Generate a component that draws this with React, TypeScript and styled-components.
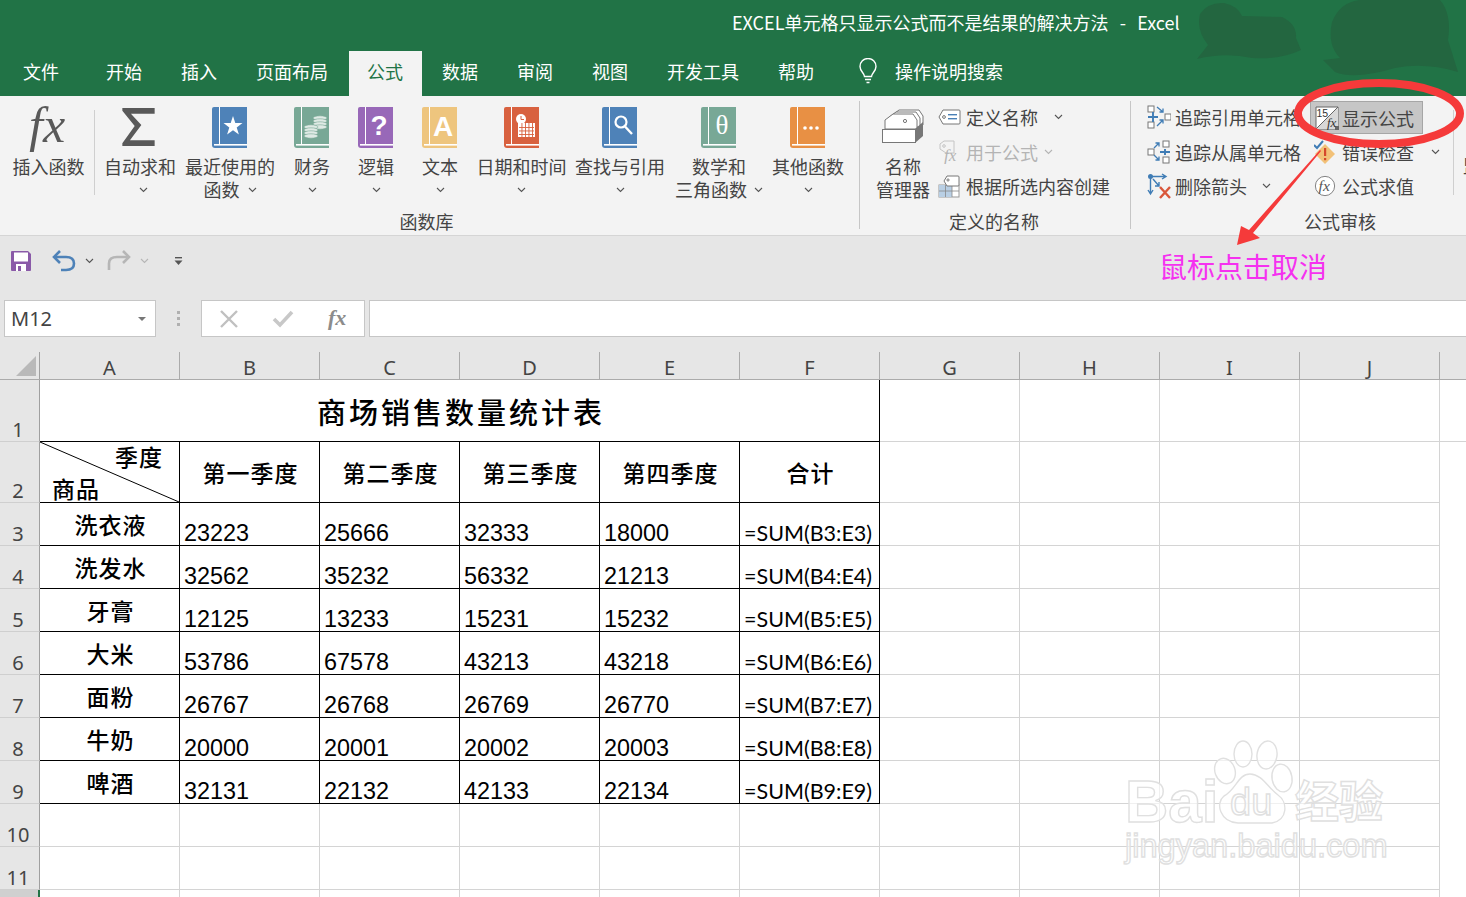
import React from "react";
import styled, { createGlobalStyle } from "styled-components";

const Global = createGlobalStyle`
  html, body { margin: 0; padding: 0; background: #fff; overflow: hidden; }
  * { box-sizing: border-box; }
`;

const CJK = `"Noto Sans CJK SC", "Noto Sans", sans-serif`;

const Page = styled.div`
  position: relative;
  width: 1466px;
  height: 897px;
  overflow: hidden;
  font-family: ${CJK};
  background: #fff;
`;

/* ---------- title + tabs ---------- */
const Head = styled.header`
  position: relative;
  height: 96px;
  background: #217346;
  color: #fff;
  overflow: hidden;
`;
const TitleRow = styled.div`
  position: relative;
  height: 51px;
  padding: 9px 0 0 732px;
  font-size: 18px;
  line-height: 26px;
  white-space: pre;
  word-spacing: 1.6px;
`;
const TabRow = styled.nav`
  display: flex;
  gap: 2px;
  height: 45px;
  padding-left: 4.5px;
`;
const Tab = styled.div<{ $active?: boolean; $after?: number }>`
  height: 45px;
  padding: 0 18.5px 5px;
  margin-right: ${(p) => p.$after ?? 0}px;
  display: flex;
  align-items: center;
  font-size: 18px;
  background: ${(p) => (p.$active ? "#f3f3f3" : "transparent")};
  color: ${(p) => (p.$active ? "#217346" : "#fff")};
`;
const Search = styled.div`
  display: flex;
  align-items: center;
  gap: 17px;
  margin-left: 23.5px;
  font-size: 18px;
  padding-bottom: 5px;
`;
const HeadBlobs = styled.svg`
  position: absolute;
  top: 0;
  left: 1190px;
`;

/* ---------- ribbon ---------- */
const Ribbon = styled.section`
  display: flex;
  height: 140px;
  background: #f3f3f3;
  border-bottom: 1px solid #d5d5d5;
  color: #444;
  font-size: 18px;
  overflow: hidden;
`;
const Group = styled.div<{ $w: number }>`
  width: ${(p) => p.$w}px;
  flex: none;
  display: flex;
  flex-direction: column;
  height: 139px;
`;
const GroupBody = styled.div<{ $left?: number }>`
  flex: 1;
  display: flex;
  padding-left: ${(p) => p.$left ?? 0}px;
`;
const GroupLabel = styled.div<{ $pl?: number; $pr?: number }>`
  height: 26px;
  line-height: 26px;
  margin-bottom: 1px;
  padding-left: ${(p) => p.$pl ?? 0}px;
  padding-right: ${(p) => p.$pr ?? 0}px;
  text-align: center;
  white-space: nowrap;
`;
const GroupSep = styled.div`
  width: 1px;
  height: 128px;
  margin-top: 5px;
  background: #c6c6c6;
  flex: none;
`;
const InnerSep = styled.div`
  width: 1px;
  height: 85px;
  margin-top: 14px;
  background: #cfcfcf;
  flex: none;
`;
const BigBtn = styled.div<{ $w: number; $ml?: number }>`
  width: ${(p) => p.$w}px;
  margin-left: ${(p) => p.$ml ?? 0}px;
  flex: none;
  display: flex;
  flex-direction: column;
  align-items: center;
  padding-top: 11px;
  white-space: nowrap;
`;
const BigIcon = styled.div<{ $gap?: number }>`
  height: 40px;
  margin-bottom: ${(p) => p.$gap ?? 8}px;
  padding-right: 1px;
  display: flex;
  align-items: center;
  justify-content: center;
`;
const BtnLine = styled.div`
  height: 23px;
  line-height: 23px;
  display: flex;
  align-items: center;
  gap: 5px;
`;
const Col = styled.div<{ $w?: number }>`
  width: ${(p) => (p.$w ? `${p.$w}px` : "auto")};
  flex: none;
  padding-top: 4px;
`;
const SmallRow = styled.div<{ $icon: number; $gap: number; $dim?: boolean; $pad?: number }>`
  height: 34.5px;
  display: flex;
  align-items: center;
  gap: ${(p) => p.$gap}px;
  padding-left: ${(p) => p.$pad ?? 0}px;
  white-space: nowrap;
  color: ${(p) => (p.$dim ? "#b4b4b4" : "#444")};
  & > svg:first-child {
    width: ${(p) => p.$icon}px;
    flex: none;
  }
`;
const ActiveRow = styled(SmallRow)`
  height: 33px;
  margin: 1px 0 0.5px;
  width: 113px;
  background: #c6c6c6;
  border: 1px solid #a6a6a6;
  padding-left: 4px;
`;
const Clip = styled.div`
  position: relative;
  top: 0;
  padding: 56px 0 0 9px;
  white-space: nowrap;
`;
const Chev = styled.svg<{ $ml?: number }>`
  margin-left: ${(p) => p.$ml ?? 0}px;
  flex: none;
`;

const Chevron = ({ ml, color = "#555" }: { ml?: number; color?: string }) => (
  <Chev $ml={ml} width="9" height="6" viewBox="0 0 9 6">
    <polyline points="1,1 4.5,4.5 8,1" fill="none" stroke={color} strokeWidth="1.1" />
  </Chev>
);

const Book = ({ color, children }: { color: string; children?: React.ReactNode }) => (
  <svg width="35" height="41" viewBox="0 0 35 41">
    <path d="M2 0H35V41H3Q0 41 0 38V2Q0 0 2 0Z" fill={color} />
    <rect x="7" y="0" width="1" height="37" fill="#fff" />
    <rect x="2" y="37" width="33" height="1.6" fill="#fff" />
    {children}
  </svg>
);

const FxBig = () => (
  <svg width="44" height="50" viewBox="0 0 44 50">
    <text x="3" y="40" fontFamily="'Liberation Serif', serif" fontStyle="italic" fontSize="50" fill="#595959">
      fx
    </text>
  </svg>
);
const Sigma = () => (
  <svg width="33" height="38" viewBox="0 0 34 40" style={{ marginRight: 3 }}>
    <path d="M0 0H34V6H9L20 18L8 34H34V40H0V37L13 19L0 3Z" fill="#595959" />
  </svg>
);
const Coins = () => (
  <>
    {[11, 14, 17, 20].map((y) => (
      <ellipse key={y} cx="26" cy={y} rx="7" ry="2.2" fill="#dfeae5" stroke="#78a896" strokeWidth="0.6" />
    ))}
    {[20, 23, 26, 29].map((y) => (
      <ellipse key={y} cx="17" cy={y} rx="7" ry="2.2" fill="#dfeae5" stroke="#78a896" strokeWidth="0.6" />
    ))}
  </>
);
const BookGlyph = styled.text`
  fill: #fff;
  text-anchor: middle;
  font-family: "Liberation Sans", sans-serif;
  font-weight: 700;
`;
const DateGlyph = () => (
  <>
    <circle cx="17" cy="12" r="5" fill="#fff" />
    <path d="M17 9V12.5H20" stroke="#d8613f" strokeWidth="1" fill="none" />
    <rect x="14" y="16" width="17" height="14" fill="#fff" />
    {[17.5, 21, 24.5, 28].map((x) => (
      <rect key={x} x={x} y="16" width="0.9" height="14" fill="#d8613f" />
    ))}
    {[20, 23.5, 27].map((y) => (
      <rect key={y} x="15" y={y} width="15" height="0.9" fill="#d8613f" />
    ))}
  </>
);
const SearchGlyph = () => (
  <>
    <circle cx="19" cy="15" r="5.5" fill="none" stroke="#fff" strokeWidth="2.2" />
    <line x1="23" y1="19.5" x2="30" y2="27" stroke="#fff" strokeWidth="2.4" />
  </>
);

const NameMgr = () => (
  <svg width="44" height="36" viewBox="0 0 44 36">
    <path d="M4 20V11L12 5H32L36 11V20Z" fill="#fff" stroke="#777" strokeWidth="1" transform="translate(6 -4)" />
    <path d="M4 20V11L12 5H32L36 11V20Z" fill="#fff" stroke="#777" strokeWidth="1" transform="translate(3 -2)" />
    <path d="M4 20V11L12 5H32L36 11V20Z" fill="#fff" stroke="#777" strokeWidth="1" />
    <circle cx="24" cy="12" r="1.6" fill="none" stroke="#777" />
    <path d="M34 20L42 13V27L34 34Z" fill="#777" />
    <rect x="1.5" y="20.5" width="33" height="13" fill="#fff" stroke="#777" />
  </svg>
);
const TagIcon = () => (
  <svg height="18" viewBox="0 0 23 18">
    <path d="M1 9L5 2H21Q22 2 22 3V15Q22 16 21 16H5Z" fill="#fff" stroke="#777" />
    <circle cx="6" cy="9" r="1.4" fill="none" stroke="#777" />
    <rect x="10" y="6" width="9" height="1.4" fill="#4a7fb5" />
    <rect x="10" y="10" width="9" height="1.4" fill="#4a7fb5" />
  </svg>
);
const UseFormula = () => (
  <svg height="24" viewBox="0 0 22 24">
    <path d="M2 4L6 1H16V13L8 13L2 9Z" fill="none" stroke="#c4c4c4" />
    <circle cx="6" cy="6" r="1.3" fill="none" stroke="#c4c4c4" />
    <text x="6" y="21" fontFamily="'Liberation Serif', serif" fontStyle="italic" fontSize="17" fill="#b4b4b4">
      fx
    </text>
  </svg>
);
const CreateSel = () => (
  <svg height="24" viewBox="0 0 22 24">
    <rect x="1" y="11" width="20" height="12" fill="#fff" stroke="#999" />
    <rect x="1" y="11" width="13" height="12" fill="#b9cfe4" />
    <path d="M1 17H21M7.5 11V23M14 11V23" stroke="#888" strokeWidth="0.8" />
    <path d="M6 7L9 2H20Q21 2 21 3V11Q21 12 20 12H9Z" fill="#fff" stroke="#777" />
    <circle cx="10" cy="6" r="1.1" fill="none" stroke="#777" />
  </svg>
);
const TraceCell = ({ x, y }: { x: number; y: number }) => (
  <rect x={x} y={y} width="6" height="6" fill="#fff" stroke="#777" />
);
const TracePrec = () => (
  <svg height="24" viewBox="0 0 24 24">
    <TraceCell x={1} y={1} />
    <TraceCell x={1} y={17} />
    <TraceCell x={18} y={9} />
    <path d="M1 12H11M6 7V17" stroke="#3f7cb5" strokeWidth="1.9" />
    <path d="M10 2L16 7M16 3.5V7H12.5M10 21L16 15M16 18.5V15H12.5" stroke="#3f7cb5" strokeWidth="1.3" fill="none" />
  </svg>
);
const TraceDep = () => (
  <svg height="24" viewBox="0 0 24 24">
    <TraceCell x={1} y={9} />
    <TraceCell x={16} y={1} />
    <TraceCell x={16} y={17} />
    <path d="M13 12H23M18 9V15" stroke="#3f7cb5" strokeWidth="1.9" />
    <path d="M7 8L12 3M8.5 3H12V6.5M7 15L12 20M12 16.5V20H8.5" stroke="#3f7cb5" strokeWidth="1.3" fill="none" />
  </svg>
);
const RemoveArrows = () => (
  <svg height="26" viewBox="0 0 24 26">
    <circle cx="3.5" cy="3.5" r="2.5" fill="#3f7cb5" />
    <path d="M4 3.5H18M15 1L19 3.5L15 6" stroke="#3f7cb5" strokeWidth="1.4" fill="none" />
    <path d="M3.5 4V20M1 17L3.5 21L6 17M6 6L12 13M12 9V13H8" stroke="#3f7cb5" strokeWidth="1.4" fill="none" />
    <path d="M13 14L23 25M23 14L13 25" stroke="#d9573a" strokeWidth="2.4" />
  </svg>
);
const ShowFormula = () => (
  <svg height="24" viewBox="0 0 24 24">
    <path d="M1 1H23V23H1Z" fill="#fff" stroke="#666" />
    <path d="M23 1V23H1Z" fill="#d8d8d8" />
    <path d="M1 23L23 1" stroke="#666" />
    <rect x="20" y="20" width="4" height="4" fill="#666" />
    <text x="1.5" y="11" fontFamily="'Liberation Sans', sans-serif" fontSize="10.5" fill="#333">
      15
    </text>
    <text x="12" y="21" fontFamily="'Liberation Serif', serif" fontStyle="italic" fontSize="13" fill="#333">
      fx
    </text>
  </svg>
);
const ErrorCheck = () => (
  <svg height="24" viewBox="0 0 22 24">
    <path d="M11 4L21 14L11 24L1 14Z" fill="#f2c178" />
    <path d="M0 5L3 8L9 1" stroke="#3f7cb5" strokeWidth="2" fill="none" />
    <rect x="10" y="8" width="2.2" height="8" fill="#d5482c" />
    <rect x="10" y="18" width="2.2" height="2.2" fill="#d5482c" />
  </svg>
);
const FxCircle = () => (
  <svg height="24" viewBox="0 0 24 24">
    <circle cx="12" cy="12" r="10.5" fill="#fff" stroke="#777" />
    <text x="5" y="17" fontFamily="'Liberation Serif', serif" fontStyle="italic" fontSize="17" fill="#555">
      fx
    </text>
  </svg>
);

/* ---------- quick access ---------- */
const Qat = styled.div`
  height: 64px;
  background: #e6e6e6;
  display: flex;
  align-items: center;
  padding: 0 0 14px 11px;
`;
const QatItem = styled.div<{ $ml: number }>`
  margin-left: ${(p) => p.$ml}px;
  display: flex;
  align-items: center;
`;

/* ---------- formula bar ---------- */
const FormulaRow = styled.div`
  height: 52px;
  padding: 0 0 15px 4px;
  background: #e6e6e6;
  display: flex;
  align-items: stretch;
`;
const NameBox = styled.div`
  width: 152px;
  background: #fff;
  border: 1px solid #c6c6c6;
  display: flex;
  align-items: center;
  justify-content: space-between;
  padding: 0 9px 0 6px;
  font: 20px "Noto Sans", sans-serif;
  color: #444;
`;
const Caret = styled.span`
  width: 0;
  height: 0;
  border-left: 4px solid transparent;
  border-right: 4px solid transparent;
  border-top: 4px solid #777;
`;
const Dots = styled.div`
  width: 45px;
  display: flex;
  flex-direction: column;
  align-items: center;
  justify-content: center;
  gap: 3px;
  & > i {
    width: 3px;
    height: 3px;
    background: #b0b0b0;
  }
`;
const FxBox = styled.div`
  width: 164px;
  background: #fff;
  border: 1px solid #c6c6c6;
  display: flex;
  align-items: center;
  justify-content: space-between;
  padding: 0 14px 0 17px;
`;
const Input = styled.div`
  flex: 1;
  margin-left: 4px;
  background: #fff;
  border: 1px solid #c6c6c6;
  border-right: none;
`;

/* ---------- sheet ---------- */
const HeaderRow = styled.div`
  display: flex;
  height: 28px;
  background: #e6e6e6;
  border-bottom: 1px solid #ababab;
`;
const Corner = styled.div`
  width: 40px;
  flex: none;
  border-right: 1px solid #a0a0a0;
  padding: 4px 0 0 16px;
  &::before {
    content: "";
    display: block;
    width: 20px;
    height: 20px;
    background: #b9b9b9;
    clip-path: polygon(100% 0, 100% 100%, 0 100%);
  }
`;
const ColHead = styled.div`
  width: 140px;
  flex: none;
  border-right: 1px solid #ababab;
  text-align: center;
  font: 20px/32px "Noto Sans", sans-serif;
  color: #444;
`;
const Row = styled.div<{ $h: number }>`
  display: flex;
  height: ${(p) => p.$h}px;
`;
const RowHead = styled.div<{ $sel?: boolean }>`
  width: 40px;
  flex: none;
  background: ${(p) => (p.$sel ? "#d0d0d0" : "#e6e6e6")};
  border-right: ${(p) => (p.$sel ? "2px solid #217346" : "1px solid #a0a0a0")};
  border-bottom: 1px solid #cfcfcf;
  display: flex;
  align-items: flex-end;
  justify-content: center;
  font: 20px/22px "Noto Sans", sans-serif;
  color: #444;
  padding-right: 3px;
`;
const Cell = styled.div<{ $line?: boolean; $w?: number }>`
  width: ${(p) => p.$w ?? 140}px;
  flex: none;
  border-right: 1px solid ${(p) => (p.$line ? "#000" : "#d4d4d4")};
  border-bottom: 1px solid ${(p) => (p.$line ? "#000" : "#d4d4d4")};
  color: #000;
`;
const TitleCell = styled(Cell)`
  display: flex;
  align-items: center;
  justify-content: center;
  padding: 1px 0 0 3px;
  font-size: 29px;
  font-weight: 500;
  letter-spacing: 3px;
`;
const LabelCell = styled(Cell)`
  display: flex;
  align-items: center;
  justify-content: center;
  padding: 0 0 0 2px;
  font-size: 23px;
  font-weight: 500;
  letter-spacing: 1px;
  white-space: nowrap;
`;
const NumCell = styled(Cell)`
  display: flex;
  align-items: flex-end;
  padding-left: 4px;
  font: 23.4px/24px "Liberation Sans", sans-serif;
`;
const SumCell = styled(Cell)`
  display: flex;
  align-items: flex-end;
  padding-left: 4px;
  font: 21.5px/24px Lato, "Liberation Sans", sans-serif;
  white-space: nowrap;
`;
const DiagCell = styled(Cell)`
  position: relative;
  display: flex;
  flex-direction: column;
  justify-content: space-between;
  padding: 0 16px 0 12px;
  font-size: 23px;
  font-weight: 500;
  letter-spacing: 1px;
  line-height: 28px;
`;
const DiagTop = styled.div`
  align-self: flex-end;
`;
const DiagLine = styled.svg`
  position: absolute;
  left: 0;
  top: 0;
`;

/* ---------- overlays ---------- */
const Markup = styled.svg`
  position: absolute;
  left: 1230px;
  top: 70px;
`;
const Note = styled.div`
  position: absolute;
  left: 1159px;
  top: 246px;
  font-size: 28px;
  line-height: 40px;
  color: #f531f0;
  white-space: nowrap;
`;
const Watermark = styled.svg`
  position: absolute;
  left: 1110px;
  top: 730px;
`;
const WmText = styled.text`
  fill: #fff;
  fill-opacity: 0.65;
  stroke: #e0e0e0;
  stroke-width: 1.4px;
`;

const cols = ["A", "B", "C", "D", "E", "F", "G", "H", "I", "J"];
const data: [string, string, string, string, string][] = [
  ["洗衣液", "23223", "25666", "32333", "18000"],
  ["洗发水", "32562", "35232", "56332", "21213"],
  ["牙膏", "12125", "13233", "15231", "15232"],
  ["大米", "53786", "67578", "43213", "43218"],
  ["面粉", "26767", "26768", "26769", "26770"],
  ["牛奶", "20000", "20001", "20002", "20003"],
  ["啤酒", "32131", "22132", "42133", "22134"],
];
const quarters = ["第一季度", "第二季度", "第三季度", "第四季度", "合计"];

const EmptyCells = ({ n }: { n: number }) => (
  <>
    {Array.from({ length: n }).map((_, i) => (
      <Cell key={i} />
    ))}
  </>
);

export default function App() {
  return (
    <Page>
      <Global />
      <Head>
        <HeadBlobs width="276" height="96" viewBox="0 0 276 96">
          <g fill="#236640">
            <path d="M7 59L18 45Q6 30 10 14Q18 2 34 3Q48 6 52 16L92 17Q107 24 106 38L111 50Q90 60 62 58Q35 52 7 59Z" />
            <path d="M133 60L150 58Q137 45 142 22Q150 2 170 0H250Q262 14 258 40L268 72Q235 62 205 68Q165 80 145 72Z" />
          </g>
        </HeadBlobs>
        <TitleRow>EXCEL单元格只显示公式而不是结果的解决方法  -  Excel</TitleRow>
        <TabRow>
          <Tab $after={8}>文件</Tab>
          <Tab>开始</Tab>
          <Tab>插入</Tab>
          <Tab>页面布局</Tab>
          <Tab $active>公式</Tab>
          <Tab>数据</Tab>
          <Tab>审阅</Tab>
          <Tab>视图</Tab>
          <Tab>开发工具</Tab>
          <Tab>帮助</Tab>
          <Search>
            <svg width="20" height="26" viewBox="0 0 20 26">
              <path
                d="M6.5 18.5C6.5 15 2 13.5 2 8.5A8 8 0 0 1 18 8.5C18 13.5 13.5 15 13.5 18.5ZM7 21.5H13M8.5 24.5H11.5"
                fill="none"
                stroke="#fff"
                strokeWidth="1.4"
              />
            </svg>
            <span>操作说明搜索</span>
          </Search>
        </TabRow>
      </Head>

      <Ribbon>
        <Group $w={859}>
          <GroupBody $left={3}>
            <BigBtn $w={91}>
              <BigIcon $gap={8}>
                <FxBig />
              </BigIcon>
              <BtnLine>插入函数</BtnLine>
            </BigBtn>
            <InnerSep />
            <BigBtn $w={90}>
              <BigIcon>
                <Sigma />
              </BigIcon>
              <BtnLine>自动求和</BtnLine>
              <BtnLine>
                <Chevron ml={6} />
              </BtnLine>
            </BigBtn>
            <BigBtn $w={90}>
              <BigIcon>
                <Book color="#4e82b8">
                  <polygon
                    points="21,9 23.3,16 30.5,16 24.7,20.4 26.9,27.5 21,23.2 15.1,27.5 17.3,20.4 11.5,16 18.7,16"
                    fill="#fff"
                  />
                </Book>
              </BigIcon>
              <BtnLine>最近使用的</BtnLine>
              <BtnLine>
                函数
                <Chevron ml={3} />
              </BtnLine>
            </BigBtn>
            <BigBtn $w={74}>
              <BigIcon>
                <Book color="#78a896">
                  <Coins />
                </Book>
              </BigIcon>
              <BtnLine>财务</BtnLine>
              <BtnLine>
                <Chevron />
              </BtnLine>
            </BigBtn>
            <BigBtn $w={54}>
              <BigIcon>
                <Book color="#9868b8">
                  <BookGlyph x="21" y="28" fontSize="28">
                    ?
                  </BookGlyph>
                </Book>
              </BigIcon>
              <BtnLine>逻辑</BtnLine>
              <BtnLine>
                <Chevron />
              </BtnLine>
            </BigBtn>
            <BigBtn $w={74}>
              <BigIcon>
                <Book color="#eec57e">
                  <BookGlyph x="21" y="29" fontSize="28">
                    A
                  </BookGlyph>
                </Book>
              </BigIcon>
              <BtnLine>文本</BtnLine>
              <BtnLine>
                <Chevron />
              </BtnLine>
            </BigBtn>
            <BigBtn $w={89}>
              <BigIcon>
                <Book color="#d8613f">
                  <DateGlyph />
                </Book>
              </BigIcon>
              <BtnLine>日期和时间</BtnLine>
              <BtnLine>
                <Chevron />
              </BtnLine>
            </BigBtn>
            <BigBtn $w={108}>
              <BigIcon>
                <Book color="#4e82b8">
                  <SearchGlyph />
                </Book>
              </BigIcon>
              <BtnLine>查找与引用</BtnLine>
              <BtnLine>
                <Chevron />
              </BtnLine>
            </BigBtn>
            <BigBtn $w={90}>
              <BigIcon>
                <Book color="#78a896">
                  <text
                    x="21"
                    y="27"
                    fontSize="27"
                    fill="#fff"
                    textAnchor="middle"
                    fontFamily="'Liberation Serif', serif"
                  >
                    θ
                  </text>
                </Book>
              </BigIcon>
              <BtnLine>数学和</BtnLine>
              <BtnLine>
                三角函数
                <Chevron ml={2} />
              </BtnLine>
            </BigBtn>
            <BigBtn $w={88}>
              <BigIcon>
                <Book color="#e89044">
                  <circle cx="15" cy="21" r="1.8" fill="#fff" />
                  <circle cx="21" cy="21" r="1.8" fill="#fff" />
                  <circle cx="27" cy="21" r="1.8" fill="#fff" />
                </Book>
              </BigIcon>
              <BtnLine>其他函数</BtnLine>
              <BtnLine>
                <Chevron />
              </BtnLine>
            </BigBtn>
          </GroupBody>
          <GroupLabel $pr={6}>函数库</GroupLabel>
        </Group>
        <GroupSep />
        <Group $w={270}>
          <GroupBody $left={8}>
            <BigBtn $w={70}>
              <BigIcon $gap={8}>
                <NameMgr />
              </BigIcon>
              <BtnLine>名称</BtnLine>
              <BtnLine>管理器</BtnLine>
            </BigBtn>
            <Col>
              <SmallRow $icon={23} $gap={5}>
                <TagIcon />
                定义名称
                <Chevron ml={11} />
              </SmallRow>
              <SmallRow $icon={22} $gap={6} $dim>
                <UseFormula />
                用于公式
                <Chevron ml={0} color="#b4b4b4" />
              </SmallRow>
              <SmallRow $icon={22} $gap={6}>
                <CreateSel />
                根据所选内容创建
              </SmallRow>
            </Col>
          </GroupBody>
          <GroupLabel $pr={2}>定义的名称</GroupLabel>
        </Group>
        <GroupSep />
        <Group $w={322}>
          <GroupBody $left={16}>
            <Col $w={163}>
              <SmallRow $icon={24} $gap={4}>
                <TracePrec />
                追踪引用单元格
              </SmallRow>
              <SmallRow $icon={24} $gap={4}>
                <TraceDep />
                追踪从属单元格
              </SmallRow>
              <SmallRow $icon={24} $gap={4}>
                <RemoveArrows />
                删除箭头
                <Chevron ml={11} />
              </SmallRow>
            </Col>
            <Col>
              <ActiveRow $icon={24} $gap={3}>
                <ShowFormula />
                显示公式
              </ActiveRow>
              <SmallRow $icon={22} $gap={6} $pad={4}>
                <ErrorCheck />
                错误检查
                <Chevron ml={11} />
              </SmallRow>
              <SmallRow $icon={22} $gap={6} $pad={4}>
                <FxCircle />
                公式求值
              </SmallRow>
            </Col>
          </GroupBody>
          <GroupLabel $pl={96}>公式审核</GroupLabel>
        </Group>
        <InnerSep />
        <Clip>监视窗口</Clip>
      </Ribbon>

      <Qat>
        <svg width="20" height="20" viewBox="0 0 20 20">
          <path d="M0 1Q0 0 1 0H17L20 3V19Q20 20 19 20H1Q0 20 0 19Z" fill="#8a5aa8" />
          <rect x="3" y="1.5" width="14" height="9" fill="#fff" />
          <rect x="5" y="13" width="10" height="7" fill="#fff" />
          <rect x="7" y="15" width="3" height="5" fill="#8a5aa8" />
        </svg>
        <QatItem $ml={21}>
          <svg width="24" height="22" viewBox="0 0 24 22">
            <path d="M8 1L2 7L8 13" fill="none" stroke="#4e82b8" strokeWidth="2.6" />
            <path d="M3 7H14Q22 7 22 13.5T14 20H9" fill="none" stroke="#4e82b8" strokeWidth="2.6" />
          </svg>
        </QatItem>
        <QatItem $ml={9}>
          <Chevron />
        </QatItem>
        <QatItem $ml={13}>
          <svg width="24" height="22" viewBox="0 0 24 22">
            <path d="M16 1L22 7L16 13" fill="none" stroke="#b6b6b6" strokeWidth="2.6" />
            <path d="M21 7H10Q2 7 2 13.5V20" fill="none" stroke="#b6b6b6" strokeWidth="2.6" />
          </svg>
        </QatItem>
        <QatItem $ml={9}>
          <Chevron color="#b6b6b6" />
        </QatItem>
        <QatItem $ml={25}>
          <svg width="9" height="9" viewBox="0 0 9 9">
            <rect x="1" y="0" width="7" height="1.4" fill="#555" />
            <path d="M0.5 3.5H8.5L4.5 8Z" fill="#555" />
          </svg>
        </QatItem>
      </Qat>

      <FormulaRow>
        <NameBox>
          M12
          <Caret />
        </NameBox>
        <Dots>
          <i />
          <i />
          <i />
        </Dots>
        <FxBox>
          <svg width="20" height="20" viewBox="0 0 20 20">
            <path d="M2 2L18 18M18 2L2 18" stroke="#c0c0c0" strokeWidth="2.4" />
          </svg>
          <svg width="22" height="18" viewBox="0 0 22 18">
            <path d="M2 9L8 15L20 2" stroke="#c8c8c8" strokeWidth="3.6" fill="none" />
          </svg>
          <svg width="24" height="26" viewBox="0 0 24 26">
            <text
              x="2"
              y="19"
              fontFamily="'Liberation Serif', serif"
              fontStyle="italic"
              fontWeight="700"
              fontSize="22"
              fill="#8c8c8c"
            >
              fx
            </text>
          </svg>
        </FxBox>
        <Input />
      </FormulaRow>

      <HeaderRow>
        <Corner />
        {cols.map((c) => (
          <ColHead key={c}>{c}</ColHead>
        ))}
      </HeaderRow>

      <Row $h={62}>
        <RowHead>1</RowHead>
        <TitleCell $line $w={840}>
          商场销售数量统计表
        </TitleCell>
        <EmptyCells n={5} />
      </Row>
      <Row $h={61}>
        <RowHead>2</RowHead>
        <DiagCell $line>
          <DiagLine width="140" height="61" viewBox="0 0 140 61">
            <line x1="0" y1="0" x2="139" y2="60" stroke="#000" strokeWidth="1" />
          </DiagLine>
          <DiagTop>季度</DiagTop>
          <div>商品</div>
        </DiagCell>
        {quarters.map((q) => (
          <LabelCell $line key={q}>
            {q}
          </LabelCell>
        ))}
        <EmptyCells n={4} />
      </Row>
      {data.map((r, i) => (
        <Row $h={43} key={r[0]}>
          <RowHead>{i + 3}</RowHead>
          <LabelCell $line>{r[0]}</LabelCell>
          {r.slice(1).map((v, j) => (
            <NumCell $line key={j}>
              {v}
            </NumCell>
          ))}
          <SumCell $line>{`=SUM(B${i + 3}:E${i + 3})`}</SumCell>
          <EmptyCells n={4} />
        </Row>
      ))}
      {[10, 11, 12].map((n) => (
        <Row $h={43} key={n}>
          <RowHead $sel={n === 12}>{n === 12 ? "" : n}</RowHead>
          <EmptyCells n={10} />
        </Row>
      ))}

      <Markup width="236" height="190" viewBox="1230 70 236 190">
        <ellipse cx="1379" cy="113.5" rx="81" ry="30.5" fill="none" stroke="#f53a3a" strokeWidth="8" />
        <path d="M1320 150L1321 151L1253 233L1260 238L1237 245L1241 226L1249 230Z" fill="#f53a3a" />
      </Markup>
      <Note>鼠标点击取消</Note>

      <Watermark width="290" height="140" viewBox="1110 730 290 140">
        <g fill="#fff" fillOpacity="0.65" stroke="#e0e0e0" strokeWidth="1.4">
          <ellipse cx="1243" cy="754" rx="9" ry="13" />
          <ellipse cx="1267" cy="755" rx="10" ry="14" transform="rotate(8 1267 755)" />
          <ellipse cx="1225" cy="771" rx="10" ry="13" transform="rotate(-20 1225 771)" />
          <ellipse cx="1282" cy="778" rx="10" ry="14" transform="rotate(-10 1282 778)" />
          <path d="M1250 774C1238 774 1236 790 1224 796C1215 803 1220 822 1238 823H1272C1288 820 1288 802 1278 795C1268 788 1262 774 1250 774Z" />
        </g>
        <WmText x="1125" y="822" fontFamily="'Liberation Sans', sans-serif" fontWeight="700" fontSize="60">
          Bai
        </WmText>
        <WmText x="1230" y="815" fontFamily="'Liberation Sans', sans-serif" fontSize="38">
          du
        </WmText>
        <WmText x="1295" y="818" fontFamily="'Noto Sans CJK SC', sans-serif" fontWeight="700" fontSize="44">
          经验
        </WmText>
        <WmText x="1125" y="857" fontFamily="'Liberation Sans', sans-serif" fontSize="32.6">
          jingyan.baidu.com
        </WmText>
      </Watermark>
    </Page>
  );
}
